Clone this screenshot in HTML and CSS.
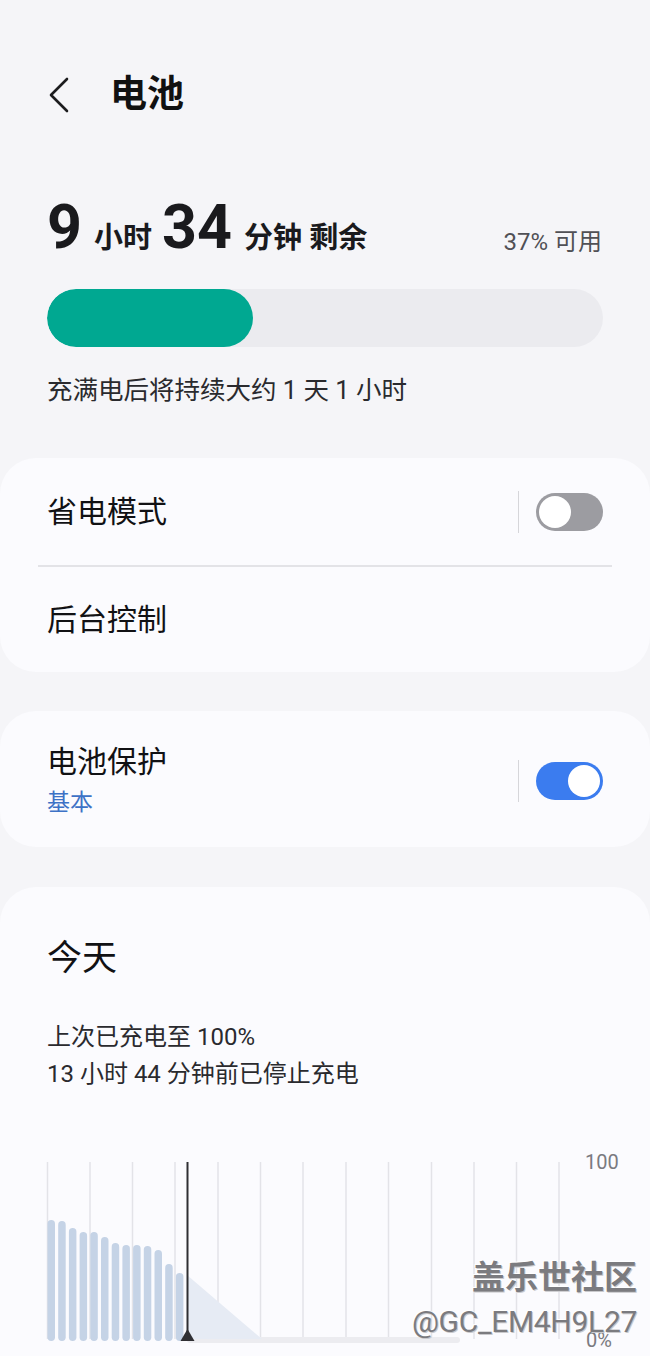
FILE: index.html
```html
<!DOCTYPE html>
<html lang="zh-CN">
<head>
<meta charset="utf-8">
<title>电池</title>
<link rel="stylesheet" href="styles.css">
</head>
<body>
<div class="page">
  <header class="topbar">
    <svg class="back" viewBox="0 0 24 36" width="24" height="36"><path d="M20 2 L4 18 L20 34" fill="none" stroke="#1c1c1e" stroke-width="2.6" stroke-linecap="round" stroke-linejoin="round"/></svg>
    <h1 class="title">电池</h1>
  </header>

  <section class="summary">
    <div class="time-row">
      <div class="time">
        <span class="big">9</span><span class="unit">小时</span><span class="big">34</span><span class="unit">分钟 剩余</span>
      </div>
      <div class="avail">37% 可用</div>
    </div>
    <div class="bar"><div class="fill" style="width:37%"></div></div>
    <p class="note">充满电后将持续大约 1 天 1 小时</p>
  </section>

  <section class="card">
    <div class="row row-first">
      <span class="label">省电模式</span>
      <div class="ctl"><span class="vsep"></span><span class="switch off"><span class="knob"></span></span></div>
    </div>
    <div class="hr"></div>
    <div class="row row-second">
      <span class="label">后台控制</span>
    </div>
  </section>

  <section class="card card-protect">
    <div class="row-protect">
      <div class="texts">
        <div class="label">电池保护</div>
        <div class="sub">基本</div>
      </div>
      <div class="ctl"><span class="vsep"></span><span class="switch on"><span class="knob"></span></span></div>
    </div>
  </section>

  <section class="card card-today">
    <h2 class="today">今天</h2>
    <p class="info">上次已充电至 100%<br>13 小时 44 分钟前已停止充电</p>
    <svg class="chart" viewBox="0 0 650 216" width="650" height="216">
      <g stroke="#e3e3e8" stroke-width="1.5">
        <line x1="47.5" y1="23" x2="47.5" y2="200"/>
        <line x1="90" y1="23" x2="90" y2="200"/>
        <line x1="132.5" y1="23" x2="132.5" y2="200"/>
        <line x1="175" y1="23" x2="175" y2="200"/>
        <line x1="218" y1="23" x2="218" y2="200"/>
        <line x1="260.5" y1="23" x2="260.5" y2="200"/>
        <line x1="303" y1="23" x2="303" y2="200"/>
        <line x1="346" y1="23" x2="346" y2="200"/>
        <line x1="388.5" y1="23" x2="388.5" y2="200"/>
        <line x1="431.5" y1="23" x2="431.5" y2="200"/>
        <line x1="474" y1="23" x2="474" y2="200"/>
        <line x1="516.5" y1="23" x2="516.5" y2="200"/>
        <line x1="559" y1="23" x2="559" y2="200"/>
      </g>
      <rect x="187" y="198" width="273" height="6" rx="3" fill="#ececf0"/>
      <polygon points="187,136 262,200 187,200" fill="#e6ebf4"/>
      <g fill="#c5d3e6">
        <rect x="47.5" y="81" width="7.5" height="121" rx="3.7"/>
        <rect x="58.2" y="82" width="7.5" height="120" rx="3.7"/>
        <rect x="68.9" y="89" width="7.5" height="113" rx="3.7"/>
        <rect x="79.6" y="93" width="7.5" height="109" rx="3.7"/>
        <rect x="90.3" y="93" width="7.5" height="109" rx="3.7"/>
        <rect x="101" y="98" width="7.5" height="104" rx="3.7"/>
        <rect x="111.7" y="104" width="7.5" height="98" rx="3.7"/>
        <rect x="122.4" y="106" width="7.5" height="96" rx="3.7"/>
        <rect x="133.1" y="106" width="7.5" height="96" rx="3.7"/>
        <rect x="143.8" y="107" width="7.5" height="95" rx="3.7"/>
        <rect x="154.5" y="111" width="7.5" height="91" rx="3.7"/>
        <rect x="165.2" y="125" width="7.5" height="77" rx="3.7"/>
        <rect x="175.9" y="134" width="7.5" height="68" rx="3.7"/>
      </g>
      <line x1="187.5" y1="23" x2="187.5" y2="196" stroke="#2f2f33" stroke-width="2"/>
      <polygon points="180.5,202 194.5,202 187.5,190" fill="#2f2f33"/>
      <text x="585" y="30" class="axis">100</text>
      <text x="586" y="208" class="axis">0%</text>
    </svg>
    <div class="watermark">
      <div class="wm1">盖乐世社区</div>
      <div class="wm2">@GC_EM4H9L27</div>
    </div>
  </section>
</div>
</body>
</html>
```

FILE: styles.css
```css
html, body {
  margin: 0;
  padding: 0;
}
body {
  background: #f5f5f8;
  font-family: Roboto, "Noto Sans CJK SC", sans-serif;
  color: #111114;
  width: 650px;
  height: 1356px;
  overflow: hidden;
}
.page {
  width: 650px;
}

/* header */
.topbar {
  display: flex;
  align-items: center;
  gap: 39px;
  height: 50px;
  padding: 70px 0 0 47px;
}
.back {
  display: block;
  flex: none;
}
.title {
  margin: 0;
  font-size: 37px;
  font-weight: 700;
  line-height: 50px;
  color: #111;
}

/* summary */
.summary {
  padding: 0 47px;
  margin-top: 77px;
}
.time-row {
  display: flex;
  align-items: baseline;
  justify-content: space-between;
}
.time {
  display: flex;
  align-items: baseline;
}
.big {
  font-size: 61px;
  font-weight: 700;
  line-height: 60px;
  color: #1a1a1d;
}
.unit {
  font-size: 29px;
  font-weight: 700;
  line-height: 30px;
  margin: 0 10px 0 12px;
  color: #1a1a1d;
}
.avail {
  font-size: 24px;
  line-height: 30px;
  color: #505055;
  margin-right: 1px;
  position: relative;
  top: 2px;
}
.bar {
  margin-top: 32px;
  height: 58px;
  border-radius: 29px;
  background: #ebebef;
  overflow: hidden;
}
.fill {
  height: 100%;
  border-radius: 29px;
  background: #00a891;
}
.note {
  margin: 25px 0 0;
  font-size: 25.5px;
  line-height: 36px;
  color: #2a2a2e;
}

/* cards */
.card {
  background: #fbfbfe;
  border-radius: 36px;
  margin-top: 50px;
}
.row {
  display: flex;
  align-items: center;
  justify-content: space-between;
  padding: 0 47px;
}
.row-first {
  height: 107px;
}
.row-second {
  height: 105px;
}
.label {
  font-size: 30px;
  line-height: 38px;
  color: #111114;
}
.hr {
  height: 2px;
  margin: 0 38px;
  background: #e3e3e7;
}
.ctl {
  display: flex;
  align-items: center;
  gap: 17px;
}
.vsep {
  display: block;
  width: 1.5px;
  height: 42px;
  background: #d6d6da;
}
.switch {
  position: relative;
  display: block;
  width: 67px;
  height: 38px;
  border-radius: 19px;
  box-sizing: border-box;
  padding: 3px;
}
.switch.off {
  background: #9c9ca1;
}
.switch.on {
  background: #3b7cef;
}
.knob {
  display: block;
  width: 32px;
  height: 32px;
  border-radius: 50%;
  background: #fff;
}
.switch.on .knob {
  margin-left: auto;
}

.card-protect {
  margin-top: 39px;
}
.row-protect {
  display: flex;
  align-items: center;
  justify-content: space-between;
  padding: 32px 47px 29px;
}
.sub {
  font-size: 23px;
  line-height: 30px;
  margin-top: 7px;
  color: #3d72c6;
}

.card-today {
  position: relative;
  margin-top: 40px;
  padding-top: 52px;
  height: 470px;
  border-radius: 36px 36px 0 0;
}
.today {
  margin: 0;
  padding: 0 47px;
  font-size: 35px;
  font-weight: 400;
  line-height: 40px;
  color: #111114;
}
.info {
  margin: 40px 0 0;
  padding: 0 47px;
  font-size: 24px;
  line-height: 37px;
  color: #2a2a2e;
}
.chart {
  display: block;
  margin-top: 46px;
}
.axis {
  font-family: Roboto, sans-serif;
  font-size: 20px;
  fill: #7a7a80;
}

/* watermark overlay */
.watermark {
  position: absolute;
  right: 13px;
  top: 371px;
  text-align: right;
  color: #7b7b7f;
  text-shadow: 1px 1px 0 #c9c9cc, -1px -1px 0 #ffffff;
}
.wm1 {
  font-size: 33px;
  font-weight: 700;
  line-height: 40px;
}
.wm2 {
  font-size: 30px;
  line-height: 28px;
  margin-top: 10px;
  letter-spacing: -0.3px;
}
```
